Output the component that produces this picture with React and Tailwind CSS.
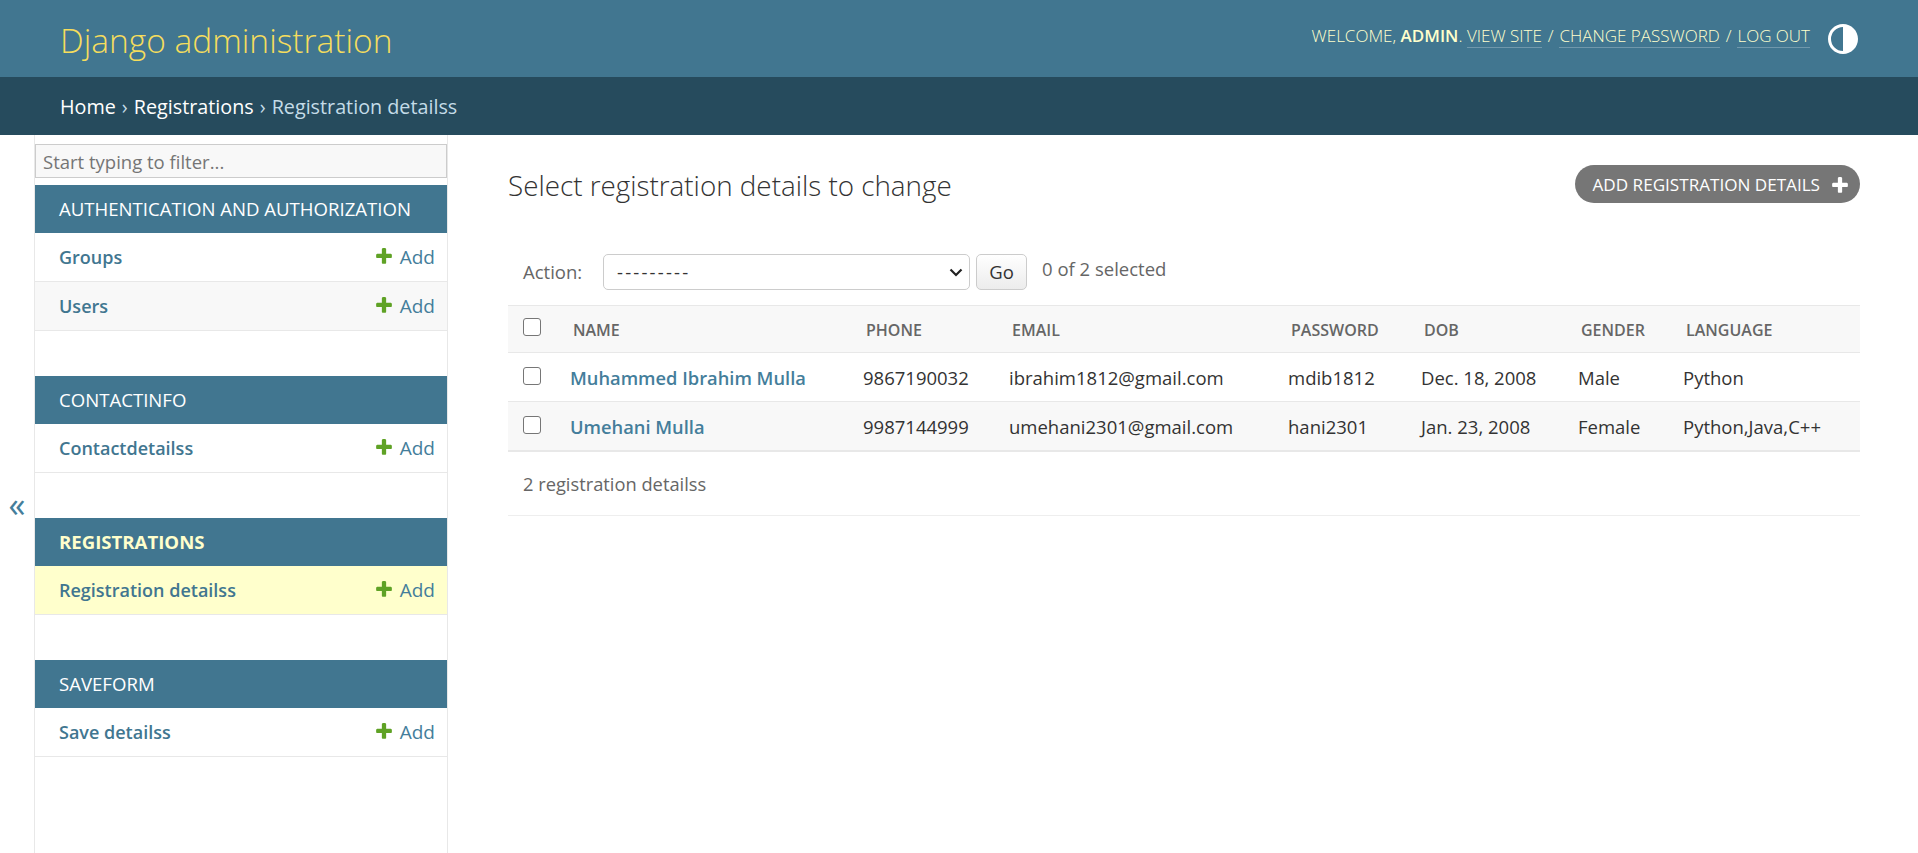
import React from 'react';

const font = "font-['Open_Sans','Noto_Sans',sans-serif]";

const modules = [
  { title: 'AUTHENTICATION AND AUTHORIZATION', rows: ['Groups', 'Users'] },
  { title: 'CONTACTINFO', rows: ['Contactdetailss'] },
  { title: 'REGISTRATIONS', rows: ['Registration detailss'], active: true },
  { title: 'SAVEFORM', rows: ['Save detailss'] },
];

const people = [
  ['Muhammed Ibrahim Mulla', '9867190032', 'ibrahim1812@gmail.com', 'mdib1812', 'Dec. 18, 2008', 'Male', 'Python'],
  ['Umehani Mulla', '9987144999', 'umehani2301@gmail.com', 'hani2301', 'Jan. 23, 2008', 'Female', 'Python,Java,C++'],
];

const columns = [
  ['NAME', 'w-[293px]'],
  ['PHONE', 'w-[146px]'],
  ['EMAIL', 'w-[279px]'],
  ['PASSWORD', 'w-[133px]'],
  ['DOB', 'w-[157px]'],
  ['GENDER', 'w-[105px]'],
  ['LANGUAGE', ''],
];

function Plus({ className }) {
  return (
    <svg viewBox="0 0 1792 1792" className={className} fill="currentColor">
      <path d="M1600 796v192q0 40-28 68t-68 28h-416v416q0 40-28 68t-68 28h-192q-40 0-68-28t-28-68v-416h-416q-40 0-68-28t-28-68v-192q0-40 28-68t68-28h416v-416q0-40 28-68t68-28h192q40 0 68 28t28 68v416h416q40 0 68 28t28 68z" />
    </svg>
  );
}

function Sidebar() {
  return (
    <div className="flex w-[448px] shrink-0">
      <div className="flex w-[34px] shrink-0 items-center justify-center pt-[20px] text-[34px] text-[#447e9b]">«</div>
      <div className="flex-1 border-x border-[#e8e8e8]">
        <div className="pt-[9px] pb-[7px]">
          <div className="flex h-[34px] items-center border border-[#cccccc] bg-[#f8f8f8] pt-[1px] pl-[7px] text-[18.5px] text-[#757575]">Start typing to filter...</div>
        </div>
        {modules.map((m) => (
          <div key={m.title} className="mb-[45px]">
            <div className={`flex h-[48px] items-center bg-[#417690] pl-[24px] text-[18.6px] ${m.active ? 'font-bold text-[#ffffcc]' : 'text-white'}`}>{m.title}</div>
            {m.rows.map((r, i) => (
              <div key={r} className={`flex h-[49px] items-center justify-between border-b border-[#e8e8e8] pr-[12px] pl-[24px] text-[18px] ${m.active ? 'bg-[#ffffcc]' : i % 2 ? 'bg-[#f8f8f8]' : 'bg-white'}`}>
                <span className="font-semibold text-[#417690]">{r}</span>
                <span className="flex items-center gap-[6px] text-[19px] text-[#447e9b]">
                  <Plus className="mb-[3px] h-[20px] w-[20px] text-[#5fa225]" />
                  Add
                </span>
              </div>
            ))}
          </div>
        ))}
      </div>
    </div>
  );
}

function ChangeList() {
  return (
    <div className="min-w-0 flex-1 pt-[30px] pr-[58px] pl-[60px]">
      <div className="flex h-[38px] items-center justify-between">
        <h1 className="pt-[4px] text-[27.8px] font-light text-[#333333]">Select registration details to change</h1>
        <a className="flex h-[38px] items-center gap-[10px] rounded-full bg-[#767676] pt-[1px] pr-[10px] pl-[18px] text-[17.1px] text-white">
          ADD REGISTRATION DETAILS
          <Plus className="h-[20px] w-[20px]" />
        </a>
      </div>
      <div className="mt-[51px] flex h-[51px] items-start text-[18.5px] text-[#666666]">
        <span className="mt-[4px] ml-[15px] w-[80px]">Action:</span>
        <div className="flex h-[36px] w-[367px] items-center justify-between rounded-[5px] border border-[#cccccc] pr-[5px] pl-[13px] text-[#333333]">
          <span className="tracking-[2.2px]">---------</span>
          <svg viewBox="0 0 16 16" className="h-[16px] w-[16px]" fill="none" stroke="#222222" strokeWidth="2.2">
            <path d="M2.5 5.5 8 11l5.5-5.5" />
          </svg>
        </div>
        <button className="ml-[6px] h-[36px] w-[51px] rounded-[5px] border border-[#cccccc] bg-gradient-to-b from-white to-[#ececec] text-[#333333]">Go</button>
        <span className="mt-[1px] ml-[15px]">0 of 2 selected</span>
      </div>
      <table className="w-full table-fixed border-collapse text-[18.5px] text-[#333333]">
        <thead>
          <tr className="h-[47px] border-y border-[#e8e8e8] bg-[#f8f8f8] text-left text-[16px] font-semibold text-[#666666]">
            <th className="w-[50px] pl-[15px] align-top">
              <span className="mt-[12px] block h-[18px] w-[18px] rounded-[3px] border border-[#767676] bg-white" />
            </th>
            {columns.map(([label, width]) => (
              <th key={label} className={`${width} pt-[2px] pl-[15px] font-semibold`}>{label}</th>
            ))}
          </tr>
        </thead>
        <tbody>
          {people.map((row, i) => (
            <tr key={row[0]} className={`h-[49px] border-b border-[#e8e8e8] ${i % 2 ? 'bg-[#f8f8f8]' : 'bg-white'}`}>
              <td className="pl-[15px] align-top">
                <span className="mt-[14px] block h-[18px] w-[18px] rounded-[3px] border border-[#767676] bg-white" />
              </td>
              {row.map((cell, j) => (
                <td key={cell} className={`pt-[2px] pl-[12px] ${j === 0 ? 'text-[18.3px] font-semibold text-[#447e9b]' : ''}`}>{cell}</td>
              ))}
            </tr>
          ))}
        </tbody>
      </table>
      <div className="flex h-[65px] items-center border-t border-b border-t-[#e8e8e8] border-b-[#eeeeee] pl-[15px] text-[18.3px] text-[#666666]">2 registration detailss</div>
    </div>
  );
}

export default function App() {
  return (
    <div className={`flex h-screen flex-col overflow-hidden bg-white ${font}`}>
      <header className="flex h-[77px] items-center justify-between bg-[#417690] pr-[60px] pl-[60px]">
        <div className="pt-[3px] text-[33.5px] font-light text-[#f5dd5d]">Django administration</div>
        <div className="flex items-center gap-[16px] text-[17px] font-light text-[#ffffcc]">
          <div className="mb-[6px]">
            WELCOME, <strong className="font-semibold">ADMIN</strong>.{' '}
            <a className="border-b border-white/25">VIEW SITE</a>
            <span className="mx-[1.5px]"> / </span>
            <a className="border-b border-white/25">CHANGE PASSWORD</a>
            <span className="mx-[1.5px]"> / </span>
            <a className="border-b border-white/25">LOG OUT</a>
          </div>
          <svg viewBox="0 0 24 24" className="-mr-[3px] -ml-[1px] h-[36px] w-[36px] text-white" fill="currentColor">
            <path d="M12 22C6.477 22 2 17.523 2 12S6.477 2 12 2s10 4.477 10 10-4.477 10-10 10zm0-2V4a8 8 0 1 0 0 16z" />
          </svg>
        </div>
      </header>
      <nav className="flex h-[58px] items-center bg-[#264b5d] pt-[2px] pl-[60px] text-[19.75px] text-[#c4dce8]">
        <a className="text-white">Home</a>
        <span className="mx-[6px]">›</span>
        <a className="text-white">Registrations</a>
        <span className="mx-[6px]">›</span>
        Registration detailss
      </nav>
      <main className="flex min-h-0 flex-1">
        <Sidebar />
        <ChangeList />
      </main>
    </div>
  );
}
